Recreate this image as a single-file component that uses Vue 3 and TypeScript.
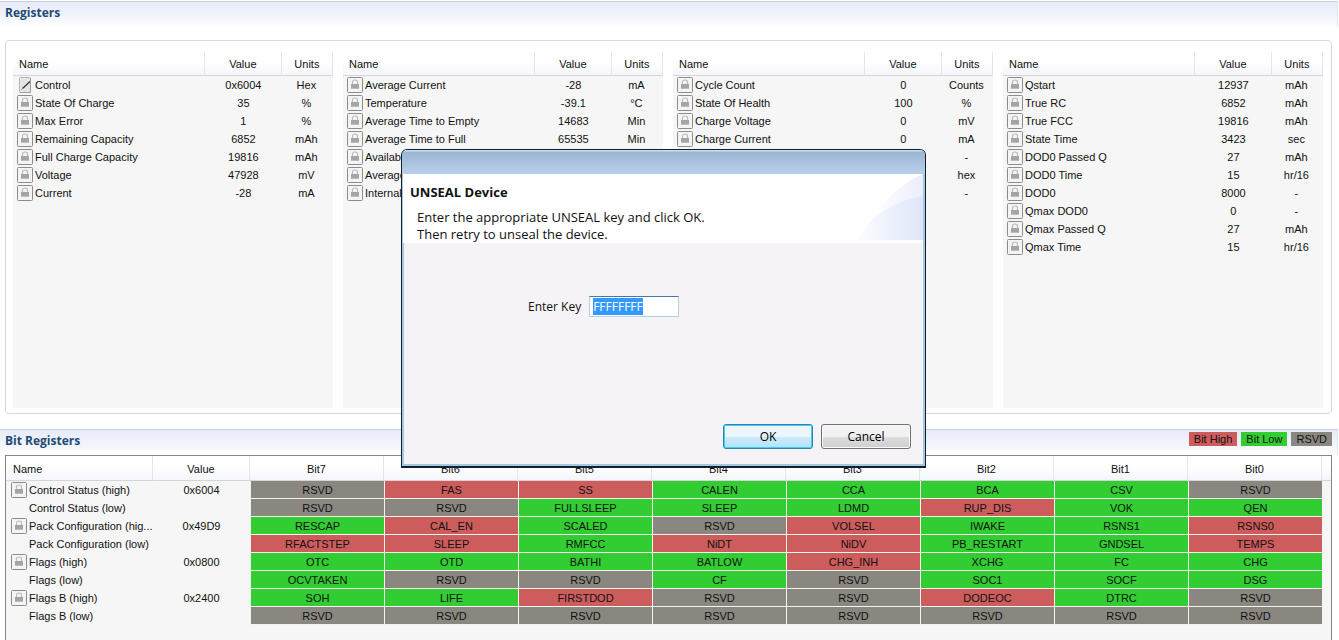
<script setup lang="ts">
import { onMounted, ref } from 'vue'

type Register = { name: string; value: string; units: string; editable?: boolean }
type BitState = 'high' | 'low' | 'rsvd'
type BitRow = { name: string; value: string; bits: [string, BitState][] }

const reg = (name: string, value: string, units: string, editable = false): Register => ({
  name,
  value,
  units,
  editable,
})

const groups: Register[][] = [
  [
    reg('Control', '0x6004', 'Hex', true),
    reg('State Of Charge', '35', '%'),
    reg('Max Error', '1', '%'),
    reg('Remaining Capacity', '6852', 'mAh'),
    reg('Full Charge Capacity', '19816', 'mAh'),
    reg('Voltage', '47928', 'mV'),
    reg('Current', '-28', 'mA'),
  ],
  [
    reg('Average Current', '-28', 'mA'),
    reg('Temperature', '-39.1', '°C'),
    reg('Average Time to Empty', '14683', 'Min'),
    reg('Average Time to Full', '65535', 'Min'),
    reg('Available', '', ''),
    reg('Average', '', ''),
    reg('Internal', '', ''),
  ],
  [
    reg('Cycle Count', '0', 'Counts'),
    reg('State Of Health', '100', '%'),
    reg('Charge Voltage', '0', 'mV'),
    reg('Charge Current', '0', 'mA'),
    reg('', '', '-'),
    reg('', '', 'hex'),
    reg('', '', '-'),
  ],
  [
    reg('Qstart', '12937', 'mAh'),
    reg('True RC', '6852', 'mAh'),
    reg('True FCC', '19816', 'mAh'),
    reg('State Time', '3423', 'sec'),
    reg('DOD0 Passed Q', '27', 'mAh'),
    reg('DOD0 Time', '15', 'hr/16'),
    reg('DOD0', '8000', '-'),
    reg('Qmax DOD0', '0', '-'),
    reg('Qmax Passed Q', '27', 'mAh'),
    reg('Qmax Time', '15', 'hr/16'),
  ],
]

const states: Record<string, BitState> = { H: 'high', L: 'low', R: 'rsvd' }
// Each token is a state letter (H, L or R), a colon and the bit label; a lone R is a reserved bit.
const bitRow = (name: string, value: string, spec: string): BitRow => ({
  name,
  value,
  bits: spec.split(' ').map((t) => {
    const [s, label] = t.split(':')
    return [label ?? 'RSVD', states[s]]
  }),
})

const bitRows: BitRow[] = [
  bitRow('Control Status (high)', '0x6004', 'R H:FAS H:SS L:CALEN L:CCA L:BCA L:CSV R'),
  bitRow('Control Status (low)', '', 'R R L:FULLSLEEP L:SLEEP L:LDMD H:RUP_DIS L:VOK L:QEN'),
  bitRow('Pack Configuration (hig...', '0x49D9', 'L:RESCAP H:CAL_EN L:SCALED R H:VOLSEL L:IWAKE L:RSNS1 H:RSNS0'),
  bitRow('Pack Configuration (low)', '', 'H:RFACTSTEP H:SLEEP L:RMFCC H:NiDT H:NiDV L:PB_RESTART L:GNDSEL H:TEMPS'),
  bitRow('Flags (high)', '0x0800', 'L:OTC L:OTD L:BATHI L:BATLOW H:CHG_INH L:XCHG L:FC L:CHG'),
  bitRow('Flags (low)', '', 'L:OCVTAKEN R R L:CF R L:SOC1 L:SOCF L:DSG'),
  bitRow('Flags B (high)', '0x2400', 'L:SOH L:LIFE H:FIRSTDOD R R H:DODEOC L:DTRC R'),
  bitRow('Flags B (low)', '', 'R R R R R R R R'),
]

const key = ref('FFFFFFFF')
const keyInput = ref<HTMLInputElement | null>(null)
onMounted(() => {
  keyInput.value?.focus()
  keyInput.value?.select()
})
</script>

<template>
  <main class="page">
    <section class="section">
      <header class="section-head"><h2>Registers</h2></header>
      <div class="registers">
        <div v-for="(group, g) in groups" :key="g" class="group">
          <table class="grid">
            <colgroup>
              <col class="c-name" />
              <col class="c-value" />
              <col class="c-units" />
            </colgroup>
            <thead>
              <tr>
                <th class="left">Name</th>
                <th>Value</th>
                <th>Units</th>
              </tr>
            </thead>
            <tbody>
              <tr v-for="(r, i) in group" :key="i">
                <td class="left">
                  <span class="name">
                    <svg v-if="r.editable" class="icon" viewBox="0 0 16 16">
                      <rect x="2.5" y=".5" width="11" height="15" rx="1" fill="#e4e4e4" stroke="#b4b4b4" />
                      <path d="M13.5 1v14.5H3" fill="none" stroke="#9c9c9c" />
                      <path d="M5.5 11.5 13 4.5" fill="none" stroke="#303030" stroke-width="1.2" />
                      <path d="M4 13 5.5 11.5" fill="none" stroke="#909090" />
                    </svg>
                    <svg v-else class="icon" viewBox="0 0 16 16">
                      <rect x=".5" y=".5" width="15" height="15" rx="1" fill="#f4f4f4" stroke="#8c8c8c" />
                      <path d="M5.5 8V5a2.5 2 0 0 1 5 0V8" fill="none" stroke="#bcbcbc" stroke-width="1.2" />
                      <rect x="4" y="7" width="8" height="4" fill="#a4a4a4" />
                      <path d="M4 11.5H12" stroke="#bcbcbc" />
                    </svg>
                    <span class="label">{{ r.name }}</span>
                  </span>
                </td>
                <td>{{ r.value }}</td>
                <td>{{ r.units }}</td>
              </tr>
            </tbody>
          </table>
        </div>
      </div>
    </section>

    <section class="section bit-section">
      <header class="section-head bit-head">
        <h2>Bit Registers</h2>
        <ul class="legend">
          <li class="high">Bit High</li>
          <li class="low">Bit Low</li>
          <li class="rsvd">RSVD</li>
        </ul>
      </header>
      <div class="bit-panel">
        <table class="grid bits">
          <colgroup>
            <col class="b-name" />
            <col class="b-value" />
            <col v-for="n in 8" :key="n" />
            <col class="b-rest" />
          </colgroup>
          <thead>
            <tr>
              <th class="left">Name</th>
              <th>Value</th>
              <th v-for="n in 8" :key="n">Bit{{ 8 - n }}</th>
              <th></th>
            </tr>
          </thead>
          <tbody>
            <tr v-for="row in bitRows" :key="row.name">
              <td class="left">
                <span class="name">
                  <svg v-if="row.value" class="icon" viewBox="0 0 16 16">
                    <rect x=".5" y=".5" width="15" height="15" rx="1" fill="#f4f4f4" stroke="#8c8c8c" />
                    <path d="M5.5 8V5a2.5 2 0 0 1 5 0V8" fill="none" stroke="#bcbcbc" stroke-width="1.2" />
                    <rect x="4" y="7" width="8" height="4" fill="#a4a4a4" />
                    <path d="M4 11.5H12" stroke="#bcbcbc" />
                  </svg>
                  <span v-else class="icon"></span>
                  <span class="label">{{ row.name }}</span>
                </span>
              </td>
              <td>{{ row.value }}</td>
              <td v-for="(b, i) in row.bits" :key="i" class="bit" :class="b[1]">{{ b[0] }}</td>
              <td></td>
            </tr>
          </tbody>
        </table>
      </div>
    </section>

    <form class="dialog" role="dialog" aria-labelledby="dialog-title" @submit.prevent>
      <div class="titlebar"></div>
      <div class="banner">
        <svg class="swoosh" viewBox="0 0 70 66" preserveAspectRatio="none">
          <defs>
            <linearGradient id="sw1" x1="0" x2="1">
              <stop offset="0.3" stop-color="#fff" />
              <stop offset="1" stop-color="#ebedfc" />
            </linearGradient>
            <linearGradient id="sw2" x1="0" x2="1">
              <stop offset="0" stop-color="#fcfcff" />
              <stop offset="1" stop-color="#dfe5fa" />
            </linearGradient>
          </defs>
          <path d="M0 66C22 36 46 10 70 0V66Z" fill="url(#sw1)" />
          <path d="M5 66C14 44 42 26 70 22V66Z" fill="url(#sw2)" />
        </svg>
        <h1 id="dialog-title">UNSEAL Device</h1>
        <p>Enter the appropriate UNSEAL key and click OK.<br />Then retry to unseal the device.</p>
      </div>
      <div class="field">
        <label for="unseal-key">Enter Key</label>
        <input id="unseal-key" ref="keyInput" v-model="key" type="text" spellcheck="false" />
      </div>
      <div class="actions">
        <button type="submit" class="primary">OK</button>
        <button type="button">Cancel</button>
      </div>
    </form>
  </main>
</template>

<style>
body {
  margin: 0;
  background: #fff;
}
</style>

<style scoped>
.page {
  position: relative;
  display: flex;
  flex-direction: column;
  gap: 15px;
  box-sizing: border-box;
  height: 100vh;
  padding-top: 1px;
  overflow: hidden;
  color: #111;
  font-family: "Liberation Sans", Arial, sans-serif;
  font-size: 11px;
}
.section-head {
  display: flex;
  justify-content: space-between;
  box-sizing: border-box;
  height: 26px;
  margin-right: 1px;
  padding: 0 5px;
  border-top: 1px solid #c3d0dc;
  border-right: 1px solid #e2e6f2;
  background: linear-gradient(#e7ebf8, #f3f5fc 60%, #fff);
}
h2 {
  margin: 0;
  color: #1f4a75;
  font: bold 12px/21px "Open Sans", "Noto Sans", sans-serif;
}
.registers {
  display: grid;
  grid-template-columns: repeat(4, 1fr);
  gap: 10px;
  box-sizing: border-box;
  min-height: 374px;
  margin: 13px 7px 0 5px;
  padding: 11px 8px 5px 7px;
  border: 1px solid #d6dae0;
  border-radius: 4px;
}
.group {
  background: #f6f6f6;
}
.grid {
  width: 100%;
  border-collapse: separate;
  border-spacing: 0;
  table-layout: fixed;
}
.c-name {
  width: 60%;
}
.c-value {
  width: 24%;
}
.c-units {
  width: 16%;
}
th,
td {
  overflow: hidden;
  padding: 0;
  text-align: center;
  white-space: nowrap;
}
th {
  box-sizing: border-box;
  height: 24px;
  border-right: 1px solid #e4e6ec;
  border-bottom: 1px solid #d5d5d8;
  background: linear-gradient(#fff 40%, #f5f6fc);
  font-weight: normal;
}
td {
  height: 18px;
  line-height: 18px;
}
td:last-child {
  padding-right: 2px;
}
.left {
  padding-left: 4px;
  text-align: left;
}
th.left {
  padding-left: 6px;
}
.name {
  display: flex;
  align-items: center;
  gap: 2px;
}
.icon {
  flex: none;
  width: 16px;
  height: 16px;
}
.bit-section {
  display: flex;
  flex: 1;
  flex-direction: column;
}
.legend {
  display: flex;
  gap: 4px;
  margin: 2px 0 0;
  padding: 0;
  list-style: none;
}
.legend li {
  height: 14px;
  padding: 0 5px;
  line-height: 14px;
}
.bit-panel {
  flex: 1;
  margin: 0 7px 0 5px;
  border: 1px solid #858585;
  border-bottom: 0;
  background: #f6f6f6;
}
.b-name {
  width: 147px;
}
.b-value {
  width: 97px;
}
.b-rest {
  width: 9px;
}
.bits th {
  height: 25px;
  padding-top: 2px;
}
.bits td {
  box-sizing: border-box;
  height: 18px;
  padding-top: 1px;
  border-bottom: 1px solid transparent;
  line-height: 16px;
}
.bits .left {
  padding-left: 5px;
}
.bits th.left {
  padding-left: 7px;
}
.bits .bit {
  border-bottom-color: #f4f4ee;
  border-left: 1px solid #f4f4ee;
}
.bits th:last-child {
  border-right: 0;
}
.high {
  background: #cd5c5c;
}
.low {
  background: #32cd32;
}
.rsvd {
  background: #8a8780;
}
.dialog {
  position: absolute;
  top: 149px;
  left: 401px;
  box-sizing: border-box;
  width: 525px;
  overflow: hidden;
  border: 1px solid #10202c;
  border-bottom-width: 2px;
  border-radius: 6px 6px 0 0;
  background: #f6f3f7;
  box-shadow: inset 0 0 0 2px #a5c8e0;
  color: #111;
  font: 12px/17px "Open Sans", "Noto Sans", sans-serif;
}
.titlebar {
  height: 24px;
  background: linear-gradient(#dbe8f4, #9cb6d3 10%, #b9d0ec);
}
.banner {
  position: relative;
  box-sizing: border-box;
  height: 69px;
  margin: 0 2px 0 1px;
  padding: 9px 7px 0;
  background: #fff;
}
.swoosh {
  position: absolute;
  top: 0;
  right: 0;
  width: 70px;
  height: 66px;
}
h1 {
  margin: 0 0 8px;
  font: bold 13px/18px "Open Sans", "Noto Sans", sans-serif;
}
p {
  margin: 0 0 0 7px;
  font-size: 13px;
}
.field {
  display: flex;
  align-items: center;
  gap: 8px;
  padding: 53px 0 0 126px;
}
input {
  box-sizing: border-box;
  width: 90px;
  height: 21px;
  padding: 0 3px;
  border: 1px solid #b5cfe7;
  border-top-color: #3d7bad;
  outline: 0;
  background: #fff;
  font: 12px/17px "Open Sans", "Noto Sans", sans-serif;
}
input::selection {
  background: #3399ff;
  color: #fff;
}
.actions {
  display: flex;
  justify-content: flex-end;
  gap: 8px;
  padding: 107px 14px 17px;
}
button {
  box-sizing: border-box;
  width: 90px;
  height: 25px;
  padding: 0;
  border: 1px solid #707070;
  border-radius: 3px;
  background: linear-gradient(#f2f2f2 50%, #dddddd 50%, #cfcfcf);
  box-shadow: inset 0 0 0 1px #fafafa;
  color: #000;
  font: 12px/17px "Open Sans", "Noto Sans", sans-serif;
}
.primary {
  border-color: #2c86ab;
  background: linear-gradient(#ecf7fd 50%, #cdebfb 50%, #b5e2f8);
  box-shadow: inset 0 0 0 1px #45cdf5;
}
</style>
